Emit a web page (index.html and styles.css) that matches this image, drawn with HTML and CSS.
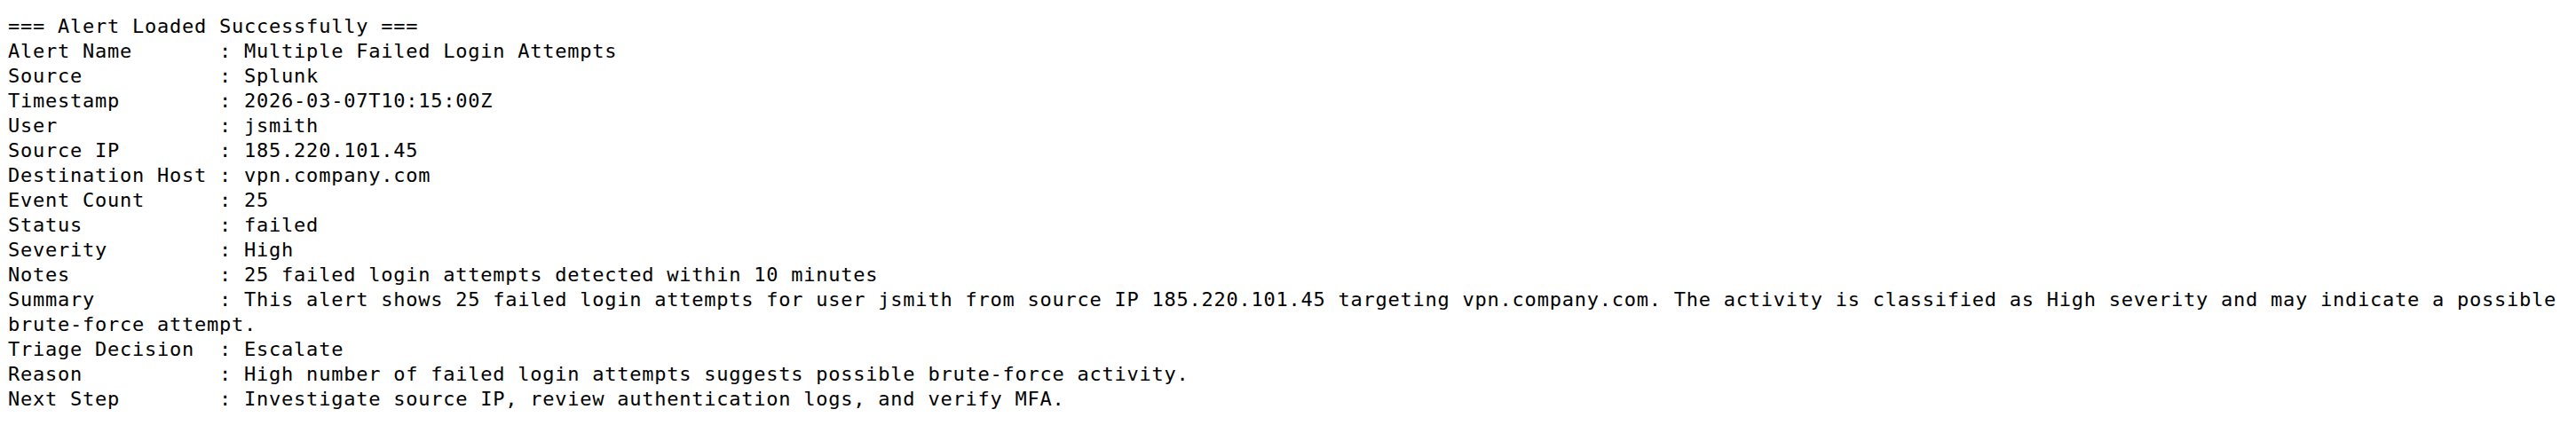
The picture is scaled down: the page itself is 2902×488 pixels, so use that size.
FILE: index.html
```html
<!DOCTYPE html>
<html>
<head>
<meta charset="utf-8">
<link rel="stylesheet" href="styles.css">
</head>
<body>
<pre class="console">=== Alert Loaded Successfully ===
Alert Name       : Multiple Failed Login Attempts
Source           : Splunk
Timestamp        : 2026-03-07T10:15:00Z
User             : jsmith
Source IP        : 185.220.101.45
Destination Host : vpn.company.com
Event Count      : 25
Status           : failed
Severity         : High
Notes            : 25 failed login attempts detected within 10 minutes
Summary          : This alert shows 25 failed login attempts for user jsmith from source IP 185.220.101.45 targeting vpn.company.com. The activity is classified as High severity and may indicate a possible
brute-force attempt.
Triage Decision  : Escalate
Reason           : High number of failed login attempts suggests possible brute-force activity.
Next Step        : Investigate source IP, review authentication logs, and verify MFA.</pre>
</body>
</html>
```
FILE: styles.css
```css
html, body {
  background: #ffffff;
}
body {
  margin: 8px;
}
.console {
  margin: 8px 0 0 1px;
  font-family: "DejaVu Sans Mono", monospace;
  font-size: 22px;
  letter-spacing: 0.76px;
  line-height: 28px;
  color: #000000;
  white-space: pre;
}
```
